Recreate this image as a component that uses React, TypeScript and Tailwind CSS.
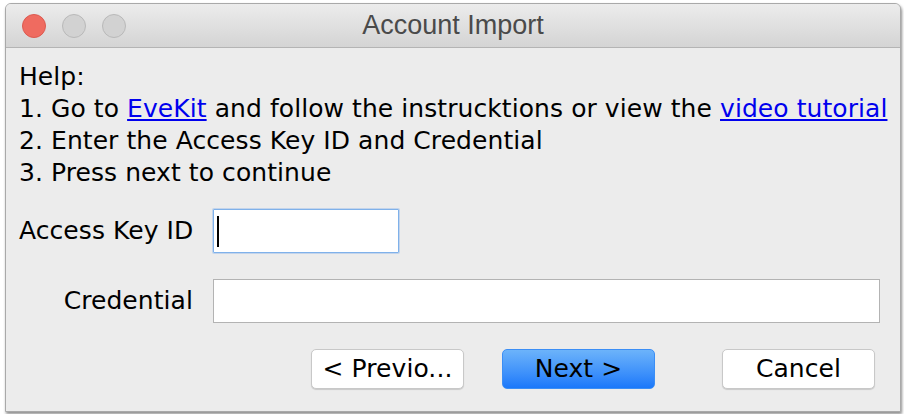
export default function App() {
  return (
    <div className="h-[414px] w-[904px] bg-white pl-[5px] pt-[3px]">
      <div className="flex h-[409px] w-[896px] flex-col overflow-hidden rounded-t-[6px] border border-[#a9a9a9] bg-[#ececec] shadow-[1px_2px_3px_rgba(0,0,0,0.45)]">
        {/* title bar */}
        <div className="relative flex h-[44px] shrink-0 items-center justify-center border-b border-[#b4b4b4] bg-gradient-to-b from-[#ececec] to-[#d4d4d4]">
          <div className="absolute left-[16px] top-[10px] flex gap-[16px]">
            <span className="h-[24px] w-[24px] rounded-full border border-[#dc5a50] bg-[#ef6b60]" />
            <span className="h-[24px] w-[24px] rounded-full border border-[#b9b9b9] bg-[#d2d2d2]" />
            <span className="h-[24px] w-[24px] rounded-full border border-[#b9b9b9] bg-[#d2d2d2]" />
          </div>
          <span className="font-['Liberation_Sans',sans-serif] text-[27px] text-[#4a4a4a]">Account Import</span>
        </div>

        {/* content */}
        <div className="flex flex-1 flex-col px-[13px] pt-[13px] font-['DejaVu_Sans',sans-serif] text-[25px] tracking-[0.07px] text-black">
          <div className="leading-[32px]">
            <p>Help:</p>
            <p className="whitespace-nowrap">
              1. Go to <a className="text-[#0000ee] underline">EveKit</a> and follow the instrucktions or view the{" "}
              <a className="text-[#0000ee] underline">video tutorial</a>
            </p>
            <p>2. Enter the Access Key ID and Credential</p>
            <p>3. Press next to continue</p>
          </div>

          <div className="mt-[20px] grid grid-cols-[174px_1fr] items-center gap-x-[20px] gap-y-[26px] pr-[7px]">
            <label className="whitespace-nowrap text-right leading-[32px]">Access Key ID</label>
            <div className="flex h-[44px] w-[186px] items-center rounded-[1px] border border-[#7fb1ea] bg-white pl-[3px] shadow-[0_0_0_1px_rgba(120,170,235,0.35)]">
              <span className="h-[31px] w-[2px] bg-black" />
            </div>
            <label className="whitespace-nowrap text-right leading-[32px]">Credential</label>
            <div className="h-[44px] w-[667px] border border-[#b3b3b3] bg-white" />
          </div>

          <div className="mt-[26px] flex pl-[292px]">
            <button className="h-[40px] w-[153px] whitespace-nowrap rounded-[5px] border border-[#c8c8c8] bg-white shadow-[0_1px_1px_rgba(0,0,0,0.15)]">
              &lt; Previo...
            </button>
            <button className="ml-[38px] h-[40px] w-[153px] whitespace-nowrap rounded-[5px] border border-[#3b8ef5] bg-gradient-to-b from-[#6cb3fa] to-[#1a78fa]">
              Next &gt;
            </button>
            <button className="ml-[67px] h-[40px] w-[153px] whitespace-nowrap rounded-[5px] border border-[#c8c8c8] bg-white shadow-[0_1px_1px_rgba(0,0,0,0.15)]">
              Cancel
            </button>
          </div>
        </div>
      </div>
    </div>
  );
}
